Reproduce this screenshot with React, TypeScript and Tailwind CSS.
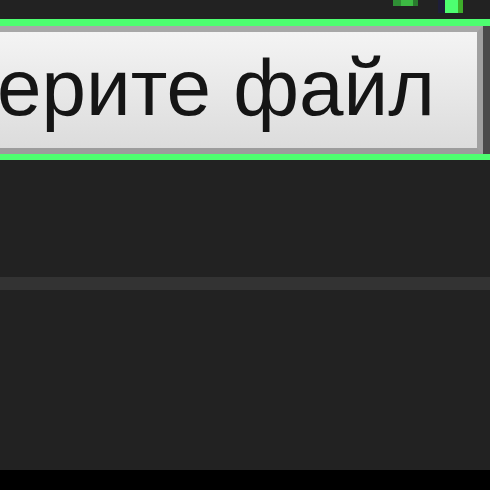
export default function App() {
  return (
    <div className="w-[490px] h-[490px] bg-[#222222] overflow-hidden flex flex-col">
      <div className="h-[19px] flex shrink-0">
        <div className="flex-1" />
        <div className="flex w-[25px] flex-col">
          <div className="h-[6px] flex">
            <div className="w-[8px] bg-[#2f8f35]" />
            <div className="w-[12px] bg-[#3cba43]" />
            <div className="w-[5px] bg-[#2a7a2e]" />
          </div>
        </div>
        <div className="w-[20px]" />
        <div className="flex h-[13px]">
          <div className="w-[7px] bg-[#1e1e38]" />
          <div className="w-[13px] bg-[#4dff70]" />
          <div className="w-[5px] bg-[#3eae2a]" />
        </div>
        <div className="w-[27px]" />
      </div>
      <div className="h-[7px] bg-[#4dff70] shrink-0" />
      <div className="flex h-[128px] shrink-0">
        <div className="flex-1 flex border-t-[6px] border-b-[6px] border-r-[6px] border-t-[#a8a8a8] border-b-[#9c9c9c] border-r-[#a0a0a0] overflow-hidden">
          <div
            className="flex-1 bg-gradient-to-b from-[#f4f4f4] to-[#dcdcdc] pt-[14px] overflow-hidden whitespace-nowrap"
            style={{ fontFamily: '"Liberation Sans", Arial, sans-serif' }}
          >
            <div className="text-[80px] leading-[84px] text-[#151515] -ml-[3px]">ерите файл</div>
          </div>
        </div>
        <div className="w-[7px] bg-[#4a4a4a]" />
      </div>
      <div className="h-[6px] bg-[#4dff70] shrink-0" />
      <div className="h-[117px] shrink-0" />
      <div className="h-[13px] bg-[#333333] shrink-0" />
      <div className="h-[180px] shrink-0" />
      <div className="flex-1 bg-black" />
    </div>
  );
}
